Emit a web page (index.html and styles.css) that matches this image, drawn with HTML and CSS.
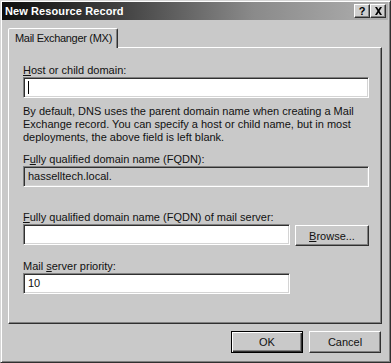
FILE: index.html
```html
<!DOCTYPE html>
<html>
<head>
<meta charset="utf-8">
<link rel="stylesheet" href="styles.css">
</head>
<body>
<div class="window">
  <div class="titlebar">
    <span class="title">New Resource Record</span>
    <div class="tbtns">
      <span class="tbtn help">?</span>
      <span class="tbtn close"><svg width="9" height="8" viewBox="0 0 9 8"><path d="M1 0h2l1.5 2.5L6 0h2L5.5 4 8 8H6L4.5 5.5 3 8H1l2.5-4z" fill="#000"/></svg></span>
    </div>
  </div>
  <div class="body">
    <div class="tabs"><div class="tab">Mail Exchanger (MX)</div></div>
    <div class="panel">
      <div class="label"><u>H</u>ost or child domain:</div>
      <div class="field wide"><span class="caret"></span></div>
      <p class="desc">By default, DNS uses the parent domain name when creating a Mail Exchange record. You can specify a host or child name, but in most deployments, the above field is left blank.</p>
      <div class="label l-fqdn">F<u>u</u>lly qualified domain name (FQDN):</div>
      <div class="field wide disabled">hasselltech.local.</div>
      <div class="label l-mail"><u>F</u>ully qualified domain name (FQDN) of mail server:</div>
      <div class="row">
        <div class="field narrow"></div>
        <div class="btn browse"><u>B</u>rowse...</div>
      </div>
      <div class="label l-prio">Mail <u>s</u>erver priority:</div>
      <div class="field narrow">10</div>
    </div>
    <div class="footer">
      <div class="btn default">OK</div>
      <div class="btn">Cancel</div>
    </div>
  </div>
</div>
</body>
</html>
```
FILE: styles.css
```css
html, body { margin: 0; padding: 0; background: #c9c9c9; }
body { font-family: "Liberation Sans", Arial, sans-serif; font-size: 11px; color: #111; }
.window {
  width: 391px; height: 363px; box-sizing: border-box;
  background: #c9c9c9;
  border: 1px solid; border-color: #d6d6d6 #303030 #303030 #d6d6d6;
  box-shadow: inset 1px 1px 0 #fff, inset -1px -1px 0 #808080;
  padding: 1px 2px 0 1px;
}
.titlebar {
  height: 18px; display: flex; align-items: center; justify-content: space-between;
  background: linear-gradient(to right, #0e0e0e 0%, #404040 30%, #8a8a8a 65%, #b0b0b0 100%);
  padding: 0 2px 0 3px;
}
.title { color: #fff; font-weight: bold; font-size: 11px; letter-spacing: 0.1px; }
.tbtns { display: flex; }
.tbtn {
  width: 16px; height: 14px; box-sizing: border-box; background: #cfcfcf;
  border: 1px solid; border-color: #fff #303030 #303030 #fff;
  box-shadow: inset -1px -1px 0 #808080;
  display: flex; align-items: center; justify-content: center;
  font-weight: bold; font-size: 11px; line-height: 1; color: #000;
}
.body { padding: 8px 6px 0 6px; }
.tabs { display: flex; height: 19px; position: relative; z-index: 1; }
.tab {
  width: 110px; box-sizing: border-box; height: 20px; white-space: nowrap;
  border: 1px solid; border-bottom: none; border-color: #fff #303030 transparent #fff;
  box-shadow: inset -1px 0 0 #808080;
  border-radius: 2px 2px 0 0;
  background: #c9c9c9; padding: 3px 0 0 6px; line-height: 13px; letter-spacing: -0.3px;
}
.panel {
  width: 374px; height: 277px; box-sizing: border-box;
  border: 1px solid; border-color: #fff #303030 #303030 #fff;
  box-shadow: inset -1px -1px 0 #808080;
  padding: 16px 13px 0 14px;
  display: flex; flex-direction: column; align-items: flex-start;
}
.label { line-height: 13px; height: 13px; white-space: nowrap; }
.label u, .btn u { text-decoration: underline; text-underline-offset: 1px; }
.field {
  height: 21px; box-sizing: border-box; background: #fff;
  border: 1px solid; border-color: #808080 #fff #fff #808080;
  box-shadow: inset 1px 1px 0 #303030, inset -1px -1px 0 #d4d4d4;
  padding: 0 4px; line-height: 19px; white-space: nowrap;
  display: flex; align-items: center;
}
.field.wide { width: 346px; }
.field.narrow { width: 267px; }
.field.disabled { background: #c9c9c9; }
.caret { width: 1px; height: 13px; background: #000; }
.desc { margin: 7px 0 0; line-height: 13px; width: 350px; }
.l-fqdn { margin-top: 9px; }
.l-mail { margin-top: 24px; }
.row { display: flex; gap: 5px; align-items: flex-start; }
.l-prio { margin-top: 14px; }
.btn {
  width: 72px; height: 22px; box-sizing: border-box; background: #c9c9c9;
  border: 1px solid; border-color: #fff #303030 #303030 #fff;
  box-shadow: inset -1px -1px 0 #808080;
  display: flex; align-items: center; justify-content: center;
}
.browse { width: 74px; height: 21px; margin-top: 1px; }
.footer { display: flex; justify-content: flex-end; gap: 6px; padding: 7px 1px 0 0; }
.btn.default { border: 1px solid #000; box-shadow: inset 1px 1px 0 #fff, inset -1px -1px 0 #303030, inset -2px -2px 0 #808080; }
```
